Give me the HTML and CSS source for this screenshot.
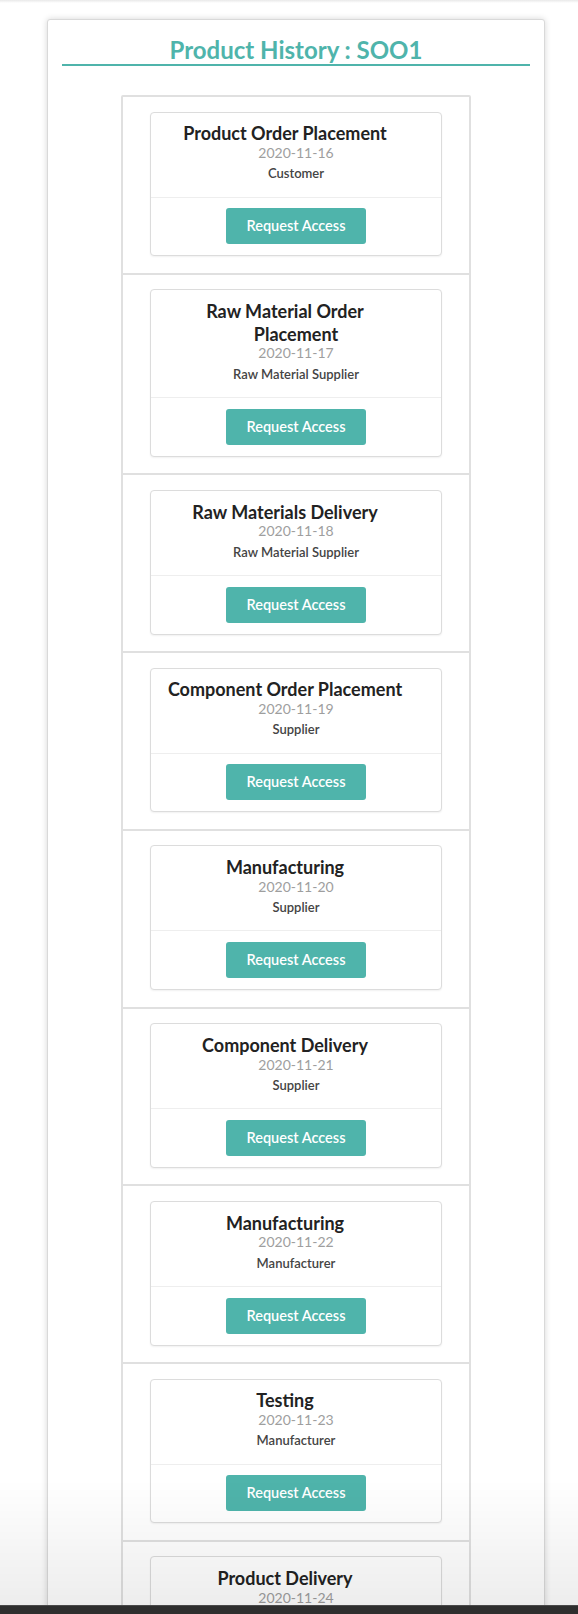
FILE: index.html
```html
<!DOCTYPE html>
<html lang="en">
<head>
<meta charset="utf-8">
<title>Product History : SOO1</title>
<link rel="stylesheet" href="styles.css">
</head>
<body>
<main class="panel">
  <h1 class="panel-title">Product History : SOO1</h1>
  <ul class="history">
    <li class="history-item">
      <article class="event-card">
        <div class="event-body">
          <h2 class="event-title"><span class="event-menu" aria-hidden="true"></span>Product Order Placement</h2>
          <div class="event-date">2020-11-16</div>
          <div class="event-role">Customer</div>
        </div>
        <div class="event-action"><button class="btn">Request Access</button></div>
      </article>
    </li>
    <li class="history-item">
      <article class="event-card">
        <div class="event-body">
          <h2 class="event-title"><span class="event-menu" aria-hidden="true"></span>Raw Material Order Placement</h2>
          <div class="event-date">2020-11-17</div>
          <div class="event-role">Raw Material Supplier</div>
        </div>
        <div class="event-action"><button class="btn">Request Access</button></div>
      </article>
    </li>
    <li class="history-item">
      <article class="event-card">
        <div class="event-body">
          <h2 class="event-title"><span class="event-menu" aria-hidden="true"></span>Raw Materials Delivery</h2>
          <div class="event-date">2020-11-18</div>
          <div class="event-role">Raw Material Supplier</div>
        </div>
        <div class="event-action"><button class="btn">Request Access</button></div>
      </article>
    </li>
    <li class="history-item">
      <article class="event-card">
        <div class="event-body">
          <h2 class="event-title"><span class="event-menu" aria-hidden="true"></span>Component Order Placement</h2>
          <div class="event-date">2020-11-19</div>
          <div class="event-role">Supplier</div>
        </div>
        <div class="event-action"><button class="btn">Request Access</button></div>
      </article>
    </li>
    <li class="history-item">
      <article class="event-card">
        <div class="event-body">
          <h2 class="event-title"><span class="event-menu" aria-hidden="true"></span>Manufacturing</h2>
          <div class="event-date">2020-11-20</div>
          <div class="event-role">Supplier</div>
        </div>
        <div class="event-action"><button class="btn">Request Access</button></div>
      </article>
    </li>
    <li class="history-item">
      <article class="event-card">
        <div class="event-body">
          <h2 class="event-title"><span class="event-menu" aria-hidden="true"></span>Component Delivery</h2>
          <div class="event-date">2020-11-21</div>
          <div class="event-role">Supplier</div>
        </div>
        <div class="event-action"><button class="btn">Request Access</button></div>
      </article>
    </li>
    <li class="history-item">
      <article class="event-card">
        <div class="event-body">
          <h2 class="event-title"><span class="event-menu" aria-hidden="true"></span>Manufacturing</h2>
          <div class="event-date">2020-11-22</div>
          <div class="event-role">Manufacturer</div>
        </div>
        <div class="event-action"><button class="btn">Request Access</button></div>
      </article>
    </li>
    <li class="history-item">
      <article class="event-card">
        <div class="event-body">
          <h2 class="event-title"><span class="event-menu" aria-hidden="true"></span>Testing</h2>
          <div class="event-date">2020-11-23</div>
          <div class="event-role">Manufacturer</div>
        </div>
        <div class="event-action"><button class="btn">Request Access</button></div>
      </article>
    </li>
    <li class="history-item">
      <article class="event-card">
        <div class="event-body">
          <h2 class="event-title"><span class="event-menu" aria-hidden="true"></span>Product Delivery</h2>
          <div class="event-date">2020-11-24</div>
        </div>
        <div class="event-action"><button class="btn">Request Access</button></div>
      </article>
    </li>
  </ul>
</main>
<div class="bottom-fade" aria-hidden="true"></div>
<div class="bottom-bar" aria-hidden="true"></div>
</body>
</html>
```

FILE: styles.css
```css
html, body {
  margin: 0;
  padding: 0;
}

body {
  background: linear-gradient(#e9e9e9 0, #ffffff 3px) no-repeat, #ffffff;
  font-family: Lato, "Noto Sans", "Liberation Sans", sans-serif;
  color: #212121;
  padding-top: 19px;
}

.panel {
  box-sizing: border-box;
  width: 498px;
  margin-left: 47px;
  padding: 16px 14px 40px;
  background: #ffffff;
  border: 1px solid #d9d9d9;
  border-radius: 3px;
  box-shadow: 0 0 6px rgba(0, 0, 0, 0.16);
}

.panel-title {
  margin: 0;
  font-size: 24px;
  line-height: 28px;
  font-weight: 700;
  color: #4fb4ab;
  text-align: center;
  border-bottom: 2px solid #4fb4ab;
}

.history {
  list-style: none;
  margin: 29px auto 0;
  padding: 0;
  width: 350px;
  box-sizing: border-box;
  border: 2px solid #e0e0e0;
  border-radius: 2px;
}

.history-item {
  padding: 14.6px 27px 16.5px;
  border-bottom: 2px solid #e0e0e0;
}

.history-item:last-child {
  border-bottom: none;
}

.event-card {
  background: #ffffff;
  border: 1px solid #dcdcdc;
  border-radius: 4px;
  box-shadow: 0 1px 2px rgba(0, 0, 0, 0.06);
}

.event-body {
  padding: 9.7px 12px 15.3px;
  text-align: center;
  border-bottom: 1px solid #eeeeee;
}

.event-title {
  margin: 0;
  font-size: 18px;
  line-height: 22.7px;
  font-weight: 700;
  color: #222222;
}

.event-menu {
  float: right;
  width: 22px;
  height: 20px;
}

.event-date {
  font-size: 14px;
  line-height: 16.8px;
  color: #9e9e9e;
}

.event-role {
  margin-top: 3.5px;
  font-size: 13px;
  line-height: 16px;
  font-weight: 600;
  color: #444444;
}

.event-action {
  padding: 10.7px 24px 11px;
  text-align: center;
}

.btn {
  display: inline-block;
  height: 36px;
  width: 140px;
  padding: 0;
  border: none;
  border-radius: 3px;
  background: #4fb4ab;
  color: #ffffff;
  font-family: Lato, "Noto Sans", "Liberation Sans", sans-serif;
  font-size: 14.5px;
  font-weight: 600;
  line-height: 36px;
  cursor: pointer;
}

.bottom-fade {
  position: fixed;
  left: 0;
  right: 0;
  bottom: 9px;
  height: 125px;
  background: linear-gradient(rgba(0, 0, 0, 0), rgba(0, 0, 0, 0.07));
  pointer-events: none;
}

.bottom-bar {
  position: fixed;
  left: 0;
  right: 0;
  bottom: 0;
  height: 8px;
  background: #2e2e2e;
  border-top: 1px solid #4a4a4a;
  pointer-events: none;
}
```
